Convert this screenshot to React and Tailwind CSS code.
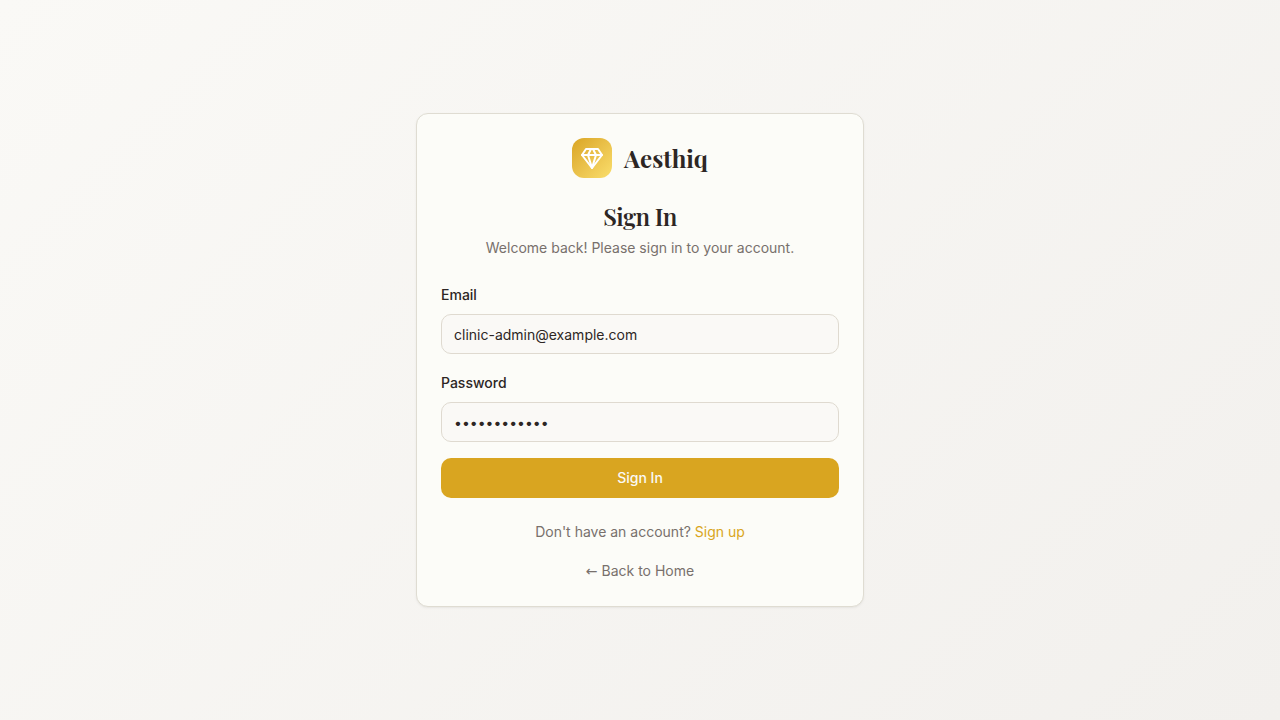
import { useState } from "react";

function GemIcon() {
  return (
    <svg
      aria-hidden="true"
      viewBox="0 0 24 24"
      fill="none"
      stroke="currentColor"
      strokeWidth="2"
      strokeLinecap="round"
      strokeLinejoin="round"
      className="size-6"
    >
      <path d="M6 3h12l4 6-10 13L2 9Z" />
      <path d="M11 3 8 9l4 13 4-13-3-6" />
      <path d="M2 9h20" />
    </svg>
  );
}

function Field({ id, label, type, value, onChange, autoComplete }) {
  return (
    <div className="flex flex-col gap-2">
      <div>
        <label htmlFor={id} className="text-sm font-medium">
          {label}
        </label>
      </div>
      <input
        id={id}
        type={type}
        value={value}
        autoComplete={autoComplete}
        onChange={(e) => onChange(e.target.value)}
        className="h-10 w-full rounded-[10px] border border-[#dfdad0] bg-[#faf9f6] px-3 py-2 text-sm outline-none focus-visible:ring-2 focus-visible:ring-[#daa520]"
      />
    </div>
  );
}

export default function App() {
  const [email, setEmail] = useState("clinic-admin@example.com");
  const [password, setPassword] = useState("password1234");

  return (
    <main className="flex min-h-screen items-center justify-center bg-linear-[135deg,#faf9f6,#f2f0ed] p-4 font-['Inter',sans-serif] text-[#2d2624]">
      <div className="w-full max-w-md rounded-xl border border-[#dfdcd2] bg-[#fcfcf8] p-6 shadow-sm shadow-black/5">
        <header className="flex flex-col items-center text-center">
          <div className="mb-6 flex items-center gap-3">
            <div className="flex size-10 items-center justify-center rounded-xl bg-linear-to-br from-[#daa520] to-[#fade6b] text-white">
              <GemIcon />
            </div>
            <span className="font-['Playfair_Display','Liberation_Serif',serif] text-2xl font-bold">Aesthiq</span>
          </div>
          <h1 className="font-['Playfair_Display','Liberation_Serif',serif] text-2xl leading-7 font-semibold tracking-tight">Sign In</h1>
          <p className="mt-2 text-sm text-[#78706c]">Welcome back! Please sign in to your account.</p>
        </header>

        <form className="mt-6 flex flex-col gap-4" onSubmit={(e) => e.preventDefault()}>
          <Field id="email" label="Email" type="email" value={email} onChange={setEmail} autoComplete="email" />
          <Field id="password" label="Password" type="password" value={password} onChange={setPassword} autoComplete="current-password" />
          <button type="submit" className="h-10 w-full rounded-[10px] bg-[#d9a520] text-sm font-medium text-[#faf9f6] hover:bg-[#c9971b]">
            Sign In
          </button>
        </form>

        <p className="mt-6 text-center text-sm text-[#78706c]">
          Don't have an account?{" "}
          <a href="#signup" className="text-[#d9a520] hover:underline">Sign up</a>
        </p>
        <p className="mt-4 text-center">
          <a href="#home" className="text-sm text-[#78706c] hover:text-[#2d2624]">
            <span className="font-['DejaVu_Sans',sans-serif]">←</span> Back to Home
          </a>
        </p>
      </div>
    </main>
  );
}
